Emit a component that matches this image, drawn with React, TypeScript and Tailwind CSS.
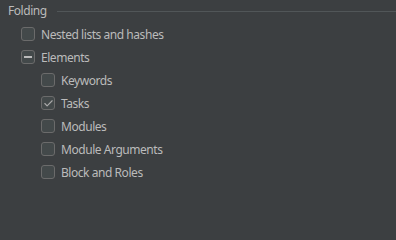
import { Check } from 'lucide-react';

type Item = { label: string; state: 'off' | 'on' | 'mixed'; indent?: boolean };

const ITEMS: Item[] = [
  { label: 'Nested lists and hashes', state: 'off' },
  { label: 'Elements', state: 'mixed' },
  { label: 'Keywords', state: 'off', indent: true },
  { label: 'Tasks', state: 'on', indent: true },
  { label: 'Modules', state: 'off', indent: true },
  { label: 'Module Arguments', state: 'off', indent: true },
  { label: 'Block and Roles', state: 'off', indent: true },
];

function Box({ state }: { state: Item['state'] }) {
  return (
    <span className="w-[14px] h-[14px] shrink-0 rounded-[3px] border border-[#6b6b6b] bg-[#43494a] flex items-center justify-center">
      {state === 'on' && <Check className="w-[11px] h-[11px] text-[#a9a9a9]" strokeWidth={2.5} />}
      {state === 'mixed' && <span className="w-[8px] h-[2px] bg-[#bbbbbb]" />}
    </span>
  );
}

export default function App() {
  return (
    <div className="w-[396px] h-[240px] bg-[#3c3f41] text-[#bbbbbb] text-[12px] tracking-[-0.45px] font-['Noto_Sans',sans-serif] pt-[3px]">
      <div className="flex items-center pl-[8px] h-[16px]">
        <span>Folding</span>
        <div className="flex-1 h-px bg-[#515658] ml-[10px]" />
      </div>
      <div className="flex flex-col gap-[9px] mt-[8px]">
        {ITEMS.map((it) => (
          <div
            key={it.label}
            className={`flex items-center gap-[6px] h-[14px] ${it.indent ? 'pl-[41px]' : 'pl-[21px]'}`}
          >
            <Box state={it.state} />
            <span className="leading-[14px] translate-y-px">{it.label}</span>
          </div>
        ))}
      </div>
    </div>
  );
}
